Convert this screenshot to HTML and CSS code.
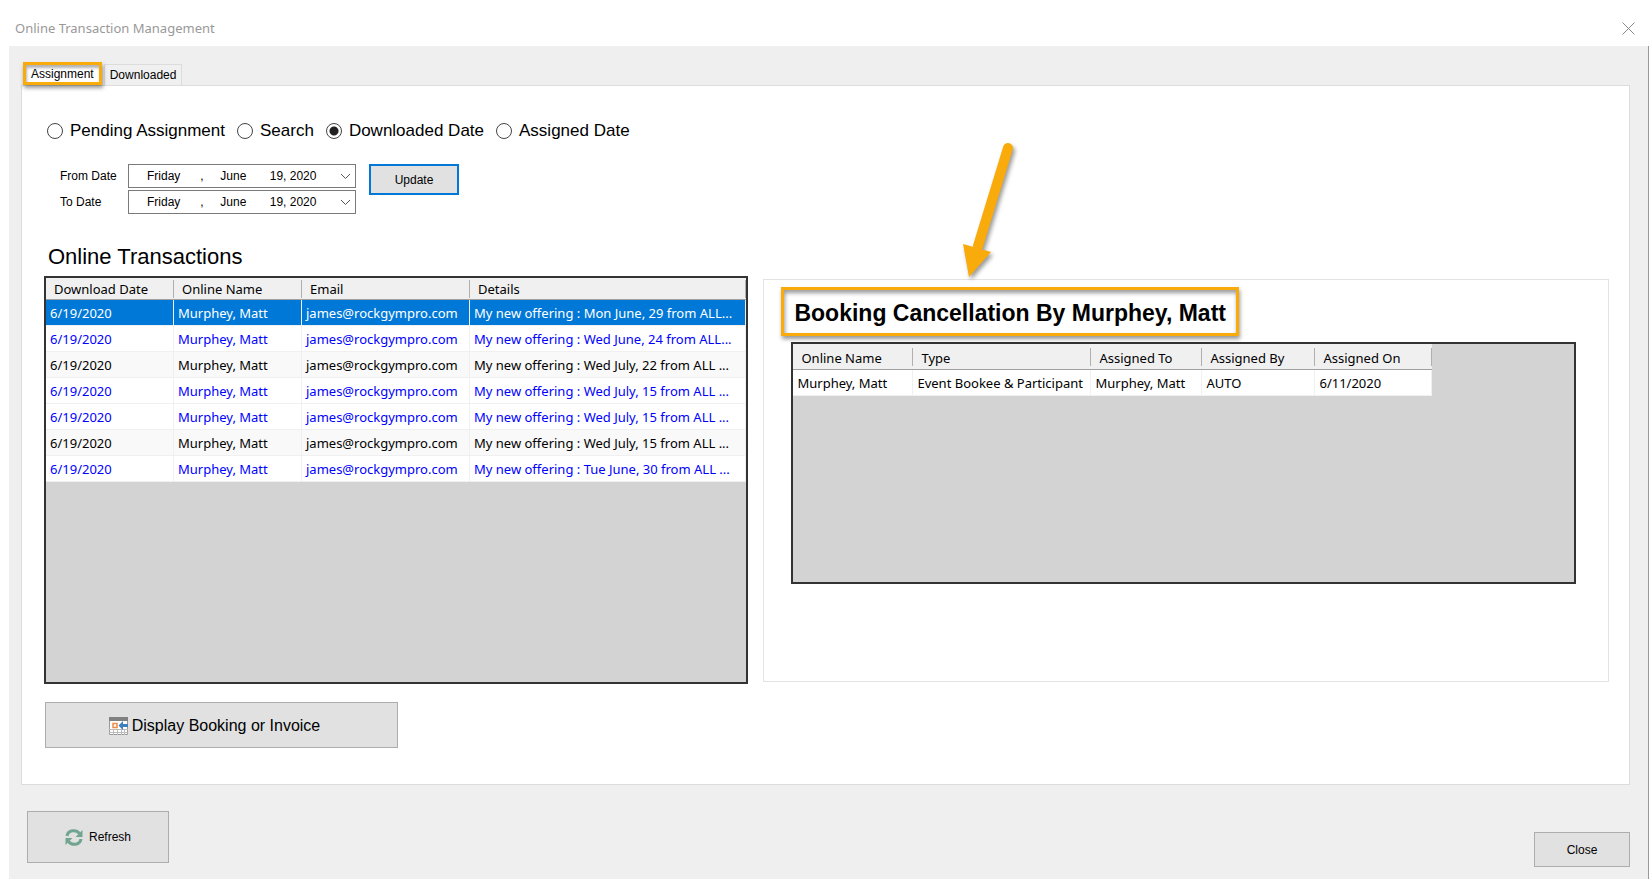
FILE: index.html
```html
<!DOCTYPE html>
<html lang="en">
<head>
    <meta charset="UTF-8">
    <meta name="viewport" content="width=device-width, initial-scale=1.0">
    <title>Online Transaction Management</title>
    <link rel="stylesheet" href="styles.css">
</head>
<body>
    <header class="titlebar">
        <h1>Online Transaction Management</h1>
        <button type="button" class="window-close" aria-label="Close window">
            <svg width="13" height="13" viewBox="0 0 13 13"><path d="M.5 .5l12 12M12.5 .5l-12 12" stroke="#8a8a8a" fill="none"/></svg>
        </button>
    </header>

    <main class="window">
        <nav class="tabs">
            <button type="button" class="tab active">Assignment</button>
            <button type="button" class="tab">Downloaded</button>
        </nav>

        <section class="tab-panel">
            <form class="filters">
                <div class="radios">
                    <label><input type="radio" name="filter">Pending Assignment</label>
                    <label><input type="radio" name="filter">Search</label>
                    <label><input type="radio" name="filter" checked>Downloaded Date</label>
                    <label><input type="radio" name="filter">Assigned Date</label>
                </div>
                <div class="date-row">
                    <div class="dates">
                        <label for="fromDate">From Date</label>
                        <div class="date-box">
                            <input type="text" id="fromDate" value="Friday      ,     June       19, 2020">
                            <button type="button" aria-label="Open calendar"><svg width="11" height="7" viewBox="0 0 11 7"><path d="M1 1l4.500 4.500L10 1" stroke="#555" fill="none"/></svg></button>
                        </div>
                        <label for="toDate">To Date</label>
                        <div class="date-box">
                            <input type="text" id="toDate" value="Friday      ,     June       19, 2020">
                            <button type="button" aria-label="Open calendar"><svg width="11" height="7" viewBox="0 0 11 7"><path d="M1 1l4.500 4.500L10 1" stroke="#555" fill="none"/></svg></button>
                        </div>
                    </div>
                    <button type="button" class="btn update">Update</button>
                </div>
            </form>

            <h2>Online Transactions</h2>

            <div class="columns">
                <div class="grid-box">
                    <table class="grid transactions">
                        <colgroup><col class="c-date"><col class="c-date"><col class="c-email"><col></colgroup>
                        <thead>
                            <tr><th>Download Date</th><th>Online Name</th><th>Email</th><th>Details</th></tr>
                        </thead>
                        <tbody>
                            <tr class="selected"><td>6/19/2020</td><td>Murphey, Matt</td><td>james@rockgympro.com</td><td>My new offering : Mon June, 29 from ALL...</td></tr>
                            <tr class="linked"><td>6/19/2020</td><td>Murphey, Matt</td><td>james@rockgympro.com</td><td>My new offering : Wed June, 24 from ALL...</td></tr>
                            <tr class="plain"><td>6/19/2020</td><td>Murphey, Matt</td><td>james@rockgympro.com</td><td>My new offering : Wed July, 22 from ALL ...</td></tr>
                            <tr class="linked"><td>6/19/2020</td><td>Murphey, Matt</td><td>james@rockgympro.com</td><td>My new offering : Wed July, 15 from ALL ...</td></tr>
                            <tr class="linked"><td>6/19/2020</td><td>Murphey, Matt</td><td>james@rockgympro.com</td><td>My new offering : Wed July, 15 from ALL ...</td></tr>
                            <tr class="plain"><td>6/19/2020</td><td>Murphey, Matt</td><td>james@rockgympro.com</td><td>My new offering : Wed July, 15 from ALL ...</td></tr>
                            <tr class="linked"><td>6/19/2020</td><td>Murphey, Matt</td><td>james@rockgympro.com</td><td>My new offering : Tue June, 30 from ALL ...</td></tr>
                        </tbody>
                    </table>
                </div>

                <div class="details">
                    <svg class="arrow" width="60" height="150" viewBox="0 0 60 150">
                        <path d="M51 14L21 112" stroke="#f9ab0b" stroke-width="10" stroke-linecap="round"/>
                        <path d="M6 110l28 8l-22 25z" fill="#f9ab0b"/>
                    </svg>
                    <h3>Booking Cancellation By Murphey, Matt</h3>
                    <div class="grid-box">
                        <table class="grid assignments">
                            <colgroup><col class="a-name"><col class="a-type"><col class="a-to"><col class="a-by"><col class="a-on"></colgroup>
                            <thead>
                                <tr><th>Online Name</th><th>Type</th><th>Assigned To</th><th>Assigned By</th><th>Assigned On</th></tr>
                            </thead>
                            <tbody>
                                <tr><td>Murphey, Matt</td><td>Event Bookee &amp; Participant</td><td>Murphey, Matt</td><td>AUTO</td><td>6/11/2020</td></tr>
                            </tbody>
                        </table>
                    </div>
                </div>
            </div>

            <button type="button" class="btn display">
                <svg width="19" height="18" viewBox="0 0 19 18">
                    <path d="M0 0h19v18H0z" fill="#fff"/>
                    <path d="M0 0h19v4H0z" fill="#808080"/>
                    <path d="M.5 4v13.500h18V4" stroke="#999" fill="none"/>
                    <path d="M4.500 12v6M8.500 12v6M12.500 12v6M15.500 12v6M0 12.500h19M0 15.500h19" stroke="#bbb" fill="none"/>
                    <path d="M4 6.500h4v4H4z" fill="#fff" stroke="#ee8a4a" stroke-width="1.500"/>
                    <path d="M19 7v3h-5v3L9.500 8.500 14 4v3z" fill="#3e80bd"/>
                </svg>
                Display Booking or Invoice
            </button>
        </section>

        <footer class="footer">
            <button type="button" class="btn refresh">
                <svg width="18" height="17" viewBox="0 0 18 17">
                    <path d="M2 7C3 1 11 0 14.500 4.500M16 10C15 16 7 17 3.500 12.500" stroke="#71a591" stroke-width="3" fill="none"/>
                    <path d="M17.500 1v7H10.500zM.5 16V9h7z" fill="#71a591"/>
                </svg>
                Refresh
            </button>
            <button type="button" class="btn close">Close</button>
        </footer>
    </main>
</body>
</html>
```
FILE: styles.css
```css
* {
    box-sizing: border-box;
}

body {
    margin: 0;
    min-height: 100vh;
    display: flex;
    flex-direction: column;
    background-color: #fff;
    color: #000;
    font-family: "Liberation Sans", Arial, sans-serif;
    font-size: 12px;
}

h1, h2, h3 {
    margin: 0;
    font-weight: normal;
}

button, input {
    font: inherit;
    color: inherit;
}

svg {
    display: block;
    flex: none;
}

.titlebar {
    display: flex;
    align-items: center;
    justify-content: space-between;
    height: 46px;
    padding: 10px 14px 0 15px;
}

.titlebar h1 {
    font-family: "Noto Sans", sans-serif;
    font-size: 13px;
    color: #999;
}

.window-close {
    padding: 0;
    border: none;
    background: none;
}

.window {
    flex: 1;
    display: flex;
    flex-direction: column;
    margin-left: 9px;
    padding: 16px 18px 12px 12px;
    background-color: #efefef;
    border-right: 1px solid #999;
}

.tabs {
    display: flex;
    align-items: flex-end;
    padding-left: 2px;
}

.tab {
    height: 21px;
    padding: 0 5px;
    border: 1px solid #dcdcdc;
    border-bottom: none;
    background-color: #f0f0f0;
}

.tab.active {
    position: relative;
    height: 23px;
    margin-right: 2px;
    padding: 0 5px;
    border: 3px solid #f9ab0b;
    background-color: #fff;
    box-shadow: 1px 3px 4px rgba(0, 0, 0, 0.4), inset 1px 3px 3px rgba(0, 0, 0, 0.3);
}

.tab-panel {
    flex: 1;
    display: flex;
    flex-direction: column;
    padding: 35px 20px 36px 22px;
    border: 1px solid #dcdcdc;
    background-color: #fff;
}

.radios {
    display: flex;
    gap: 12px;
    padding-left: 3px;
    font-size: 17px;
    line-height: 20px;
}

.radios label {
    display: flex;
    align-items: center;
    gap: 7px;
}

.radios input {
    appearance: none;
    width: 16px;
    height: 16px;
    margin: 0;
    border: 1px solid #444;
    border-radius: 50%;
    background-color: #fff;
}

.radios input:checked {
    background: radial-gradient(circle, #222 0 4px, #fff 5px);
}

.date-row {
    display: flex;
    align-items: flex-start;
    gap: 13px;
    padding: 23px 0 0 16px;
}

.dates {
    display: grid;
    grid-template-columns: 68px 228px;
    align-items: center;
    row-gap: 2px;
}

.date-box {
    display: flex;
    align-items: center;
    height: 24px;
    padding: 0 4px 0 18px;
    border: 1px solid #7a7a7a;
    background-color: #fff;
}

.date-box input {
    flex: 1;
    min-width: 0;
    padding: 0;
    border: none;
    outline: none;
}

.date-box button {
    padding: 0;
    border: none;
    background: none;
}

.btn {
    display: flex;
    align-items: center;
    justify-content: center;
    border: 1px solid #adadad;
    background-color: #e1e1e1;
}

.btn.update {
    width: 90px;
    height: 31px;
    border: 2px solid #0078d7;
}

h2 {
    padding: 30px 0 6px 4px;
    font-size: 22px;
    line-height: 26px;
}

.columns {
    flex: 1;
    display: grid;
    grid-template-columns: 704fr 845fr;
    gap: 15px;
}

.grid-box {
    min-width: 0;
    border: 2px solid #333;
    background-color: #d3d3d3;
}

.grid {
    table-layout: fixed;
    width: 100%;
    border-collapse: separate;
    border-spacing: 0;
    font-family: "Noto Sans", sans-serif;
    font-size: 13px;
    line-height: 20px;
}

.grid th {
    height: 22px;
    padding: 0 8px;
    border-bottom: 1px solid #a0a0a0;
    background: linear-gradient(#b0b0b0, #b0b0b0) right center / 1px 18px no-repeat #f0f0f0;
    font-weight: normal;
    text-align: left;
}

.grid td {
    height: 26px;
    padding: 0 4px;
    border-right: 1px solid #f0f0f0;
    border-bottom: 1px solid #f0f0f0;
    background-color: #fff;
    white-space: nowrap;
    overflow: hidden;
}

.grid .linked td {
    color: #00f;
}

.grid .plain td {
    background-color: #f9f9f9;
}

.grid .selected td {
    background-color: #0078d7;
    color: #fff;
}

.c-date {
    width: 128px;
}

.c-email {
    width: 168px;
}

.details {
    position: relative;
    display: flex;
    flex-direction: column;
    margin: 3px 0 2px;
    padding: 7px 32px 97px 17px;
    border: 1px solid #e3e3e3;
}

.details h3 {
    position: relative;
    align-self: flex-start;
    padding: 9px 10px 6px;
    border: 3px solid #f9ab0b;
    box-shadow: 1px 3px 4px rgba(0, 0, 0, 0.4), inset 1px 3px 4px rgba(0, 0, 0, 0.4);
    font-size: 23px;
    font-weight: bold;
    line-height: 28px;
}

.details .grid-box {
    flex: 1;
    margin: 6px 0 0 10px;
}

.assignments {
    width: 639px;
}

.assignments th {
    height: 26px;
    padding-top: 2px;
}

.a-name {
    width: 120px;
}

.a-type {
    width: 178px;
}

.a-to {
    width: 111px;
}

.a-by {
    width: 113px;
}

.a-on {
    width: 117px;
}

/* arrow pointing at the booking heading */
.arrow {
    position: absolute;
    left: 193px;
    top: -146px;
    fill: none;
    filter: drop-shadow(2px 3px 2px rgba(0, 0, 0, 0.4));
}

.btn.display {
    width: 353px;
    height: 46px;
    margin: 18px 0 0 1px;
    padding: 2px 20px 0 6px;
    gap: 4px;
    font-size: 16px;
}

.btn.refresh {
    width: 142px;
    height: 52px;
    gap: 6px;
}

.btn.close {
    width: 96px;
    height: 35px;
    align-self: flex-end;
}

.footer {
    display: flex;
    align-items: flex-start;
    justify-content: space-between;
    padding: 26px 0 0 6px;
}

.footer .close {
    margin-top: 21px;
}
```
